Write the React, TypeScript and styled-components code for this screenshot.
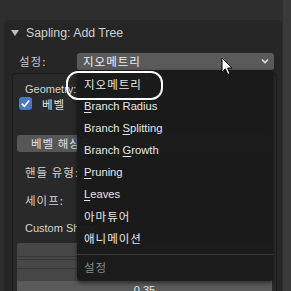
import React from 'react';
import styled, { createGlobalStyle } from 'styled-components';

const GlobalStyle = createGlobalStyle`
  html, body {
    margin: 0;
    padding: 0;
    background: #2e2e2e;
    overflow: hidden;
  }
  body {
    font-family: 'Liberation Sans', 'Noto Sans CJK KR', sans-serif;
  }
`;

const MENU_ITEMS: { label: string; key?: number }[] = [
  { label: '지오메트리' },
  { label: 'Branch Radius', key: 0 },
  { label: 'Branch Splitting', key: 7 },
  { label: 'Branch Growth', key: 7 },
  { label: 'Pruning', key: 0 },
  { label: 'Leaves', key: 0 },
  { label: '아마튜어' },
  { label: '애니메이션' },
];

const App: React.FC = () => {
  // 메뉴 단축키 글자에 밑줄
  const renderLabel = (label: string, key?: number) => {
    if (key === undefined) return <Hangul>{label}</Hangul>;
    return (
      <>
        {label.slice(0, key)}
        <Mnemonic>{label[key]}</Mnemonic>
        {label.slice(key + 1)}
      </>
    );
  };

  return (
    <Screen>
      <GlobalStyle />
      <Panel>
        <Header>
          <Triangle />
          <HeaderTitle>Sapling: Add Tree</HeaderTitle>
        </Header>
        <PresetRow>
          <RowLabel>설정:</RowLabel>
          <Dropdown>
            <Hangul>지오메트리</Hangul>
            <Chevron viewBox="0 0 10 10">
              <path d="M2 3.5 L5 6.5 L8 3.5" />
            </Chevron>
          </Dropdown>
        </PresetRow>
        <SubPanel>
          <FieldLabel $top={1}>Geometry:</FieldLabel>
          <CheckRow>
            <CheckBox>
              <svg viewBox="0 0 14 14" width="13" height="13">
                <path d="M3 7.2 L5.8 10 L11 3.8" fill="none" stroke="#fff" strokeWidth="1.8" />
              </svg>
            </CheckBox>
            <Hangul>베벨</Hangul>
          </CheckRow>
          <WideButton>
            <Hangul>베벨 해상도</Hangul>
          </WideButton>
          <FieldLabel $top={12}>
            <Hangul>핸들 유형:</Hangul>
          </FieldLabel>
          <FieldLabel $top={12}>
            <Hangul>세이프:</Hangul>
          </FieldLabel>
          <FieldLabel $top={12}>Custom Shape</FieldLabel>
          <CurveBox>
            <GridLine $top={13} />
            <GridLine $top={16} />
            <GridLine $top={25} />
          </CurveBox>
          <ValueField>0.35</ValueField>
        </SubPanel>
      </Panel>
      <ScrollStrip />

      <Menu>
        {MENU_ITEMS.map((item) => (
          <MenuItem key={item.label}>{renderLabel(item.label, item.key)}</MenuItem>
        ))}
        <Separator />
        <MenuItem $disabled>
          <Hangul>설정</Hangul>
        </MenuItem>
      </Menu>
      <Highlight />
      <Cursor viewBox="0 0 12 19" width="12" height="19">
        <path d="M1 1 L1 15 L4.3 11.8 L6.8 17.5 L9 16.5 L6.6 11 L11 11 Z" fill="#fff" stroke="#000" strokeWidth="1" />
      </Cursor>
    </Screen>
  );
};

const Screen = styled.div`
  position: relative;
  display: flex;
  width: 291px;
  height: 291px;
  padding: 20px 0 0 4px;
  box-sizing: border-box;
  overflow: hidden;
  background: #2e2e2e;
  color: #d8d8d8;
  font-size: 11px;
`;

const Hangul = styled.span`
  font-family: 'Noto Sans CJK KR', sans-serif;
  font-size: 11.5px;
  letter-spacing: 1px;
`;

const Panel = styled.div`
  display: flex;
  flex-direction: column;
  width: 278px;
  background: #262626;
  border-radius: 5px 5px 0 0;
`;

const ScrollStrip = styled.div`
  flex: 1;
  margin-left: 1px;
  background: #3a3a3a;
  margin-top: -20px;
`;

const Header = styled.div`
  display: flex;
  align-items: center;
  height: 25px;
  padding-left: 7px;
  gap: 7px;
`;

const Triangle = styled.div`
  width: 0;
  height: 0;
  border-left: 4px solid transparent;
  border-right: 4px solid transparent;
  border-top: 6px solid #bdbdbd;
  margin-top: 1px;
`;

const HeaderTitle = styled.span`
  font-size: 12.3px;
  color: #cfcfcf;
`;

const PresetRow = styled.div`
  display: flex;
  align-items: center;
  height: 18px;
  margin-top: 7px;
`;

const RowLabel = styled.div`
  width: 73px;
  padding-left: 15px;
  box-sizing: border-box;
  color: #c8c8c8;
  font-family: 'Noto Sans CJK KR', sans-serif;
  font-size: 11.5px;
  letter-spacing: 1px;
`;

const Dropdown = styled.div`
  display: flex;
  align-items: center;
  justify-content: space-between;
  width: 197px;
  height: 17px;
  padding: 0 4px 0 6px;
  box-sizing: border-box;
  background: #5a5a5a;
  border-radius: 3px;
  color: #f0f0f0;
`;

const Chevron = styled.svg`
  width: 10px;
  height: 10px;
  fill: none;
  stroke: #dcdcdc;
  stroke-width: 1.6;
`;

const SubPanel = styled.div`
  display: flex;
  flex-direction: column;
  margin: 3px 5px 0 8px;
  padding: 6px 0 0 4px;
  flex: 1;
  background: #292929;
  border: 1px solid #1d1d1d;
  border-bottom: none;
  border-radius: 4px 4px 0 0;
  overflow: hidden;
  & > * {
    flex-shrink: 0;
  }
`;

const FieldLabel = styled.div<{ $top?: number }>`
  height: 16px;
  line-height: 16px;
  margin-top: ${({ $top }) => $top ?? 0}px;
  padding-left: 8px;
  white-space: nowrap;
  color: #d4d4d4;
  font-size: 11px;
`;

const CheckRow = styled.div`
  display: flex;
  align-items: center;
  gap: 10px;
  height: 15px;
  margin-top: -1px;
  padding-left: 2px;
  color: #e0e0e0;
`;

const CheckBox = styled.div`
  display: flex;
  align-items: center;
  justify-content: center;
  width: 13px;
  height: 13px;
  background: #4a78c0;
  border-radius: 3px;
`;

const WideButton = styled.div`
  height: 17px;
  line-height: 17px;
  margin-top: 24px;
  margin-right: 4px;
  padding-left: 14px;
  background: #565656;
  border-radius: 3px;
  color: #e0e0e0;
`;

const CurveBox = styled.div`
  position: relative;
  height: 38px;
  margin: 7px 4px 0 0;
  background: #474747;
  border-radius: 3px 3px 0 0;
`;

const GridLine = styled.div<{ $top: number }>`
  position: absolute;
  left: 0;
  right: 0;
  top: ${({ $top }) => $top}px;
  border-top: 1px solid #383838;
`;

const ValueField = styled.div`
  height: 18px;
  line-height: 17px;
  padding-top: 1px;
  margin-right: 4px;
  text-align: center;
  background: #5a5a5a;
  color: #e8e8e8;
  font-size: 11px;
`;

const Menu = styled.div`
  position: absolute;
  left: 77px;
  top: 70px;
  width: 196px;
  height: 211px;
  padding-top: 3px;
  box-sizing: border-box;
  background: rgba(26, 26, 26, 0.97);
  border-radius: 0 0 4px 4px;
  box-shadow: 0 2px 4px rgba(0, 0, 0, 0.5);
`;

const MenuItem = styled.div<{ $disabled?: boolean }>`
  height: ${({ $disabled }) => ($disabled ? 20 : 22)}px;
  line-height: ${({ $disabled }) => ($disabled ? 20 : 22)}px;
  padding-left: 7px;
  color: ${({ $disabled }) => ($disabled ? '#8a8a8a' : '#e6e6e6')};
  font-size: 11.2px;
`;

const Mnemonic = styled.span`
  text-decoration: underline;
  text-underline-offset: 2px;
`;

const Separator = styled.div`
  height: 1px;
  margin: 5px 0 2px;
  background: #3a3a3a;
`;

const Highlight = styled.div`
  position: absolute;
  left: 66px;
  top: 71px;
  width: 93px;
  height: 25px;
  border: 2px solid #ffffff;
  border-radius: 12px;
`;

const Cursor = styled.svg`
  position: absolute;
  left: 221px;
  top: 57px;
`;

export default App;
